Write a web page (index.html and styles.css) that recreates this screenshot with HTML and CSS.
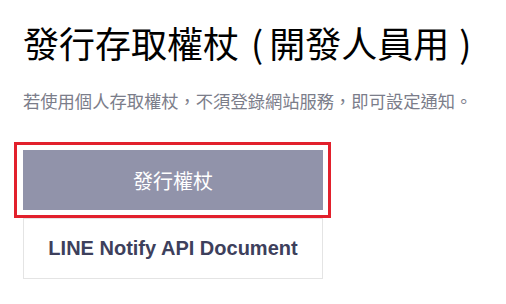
FILE: index.html
```html
<!DOCTYPE html>
<html lang="zh-Hant">
<head>
    <meta charset="UTF-8">
    <meta name="viewport" content="width=device-width, initial-scale=1.0">
    <title>發行存取權杖</title>
    <link rel="stylesheet" href="styles.css">
</head>
<body>
    <div class="container">
        <h2>發行存取權杖<span class="paren-open">(</span>開發人員用<span class="paren-close">)</span></h2>
        <p class="description">若使用個人存取權杖，不須登錄網站服務，即可設定通知。</p>
        <div class="actions">
            <div class="highlight">
                <button class="btn-primary">發行權杖</button>
            </div>
            <a class="btn-doc" href="#">LINE Notify API Document</a>
        </div>
    </div>
</body>
</html>
```

FILE: styles.css
```css
body {
    font-family: 'Noto Sans CJK TC', 'Liberation Sans', sans-serif;
    background-color: #ffffff;
    color: #000000;
    margin: 0;
}
.container {
    padding: 20px 23px 0 23px;
}
h2 {
    margin: 0;
    font-size: 36px;
    font-weight: 400;
    line-height: 44px;
    white-space: nowrap;
}
.paren-open {
    padding: 0 6px 0 12px;
}
.paren-close {
    padding-left: 10px;
}
.description {
    margin: 25px 0 0 0;
    font-size: 17.3px;
    line-height: 24px;
    color: #7b7d8a;
    white-space: nowrap;
}
.actions {
    margin-top: 29px;
    width: 300px;
    display: flex;
    flex-direction: column;
}
.highlight {
    margin: 0 -8px 0 -9px;
    padding: 5px 5px 5px 6px;
    border: 3px solid #e2202c;
}
.btn-primary {
    display: block;
    width: 100%;
    height: 60px;
    border: none;
    background: #9193aa;
    color: #ffffff;
    font-family: 'Noto Sans CJK TC', sans-serif;
    font-size: 20px;
}
.btn-doc {
    display: flex;
    align-items: center;
    justify-content: center;
    height: 59px;
    border: 1px solid #e4e4e4;
    color: #3d405c;
    font-family: 'Liberation Sans', Arial, sans-serif;
    font-weight: 700;
    font-size: 20px;
    text-decoration: none;
}
```
